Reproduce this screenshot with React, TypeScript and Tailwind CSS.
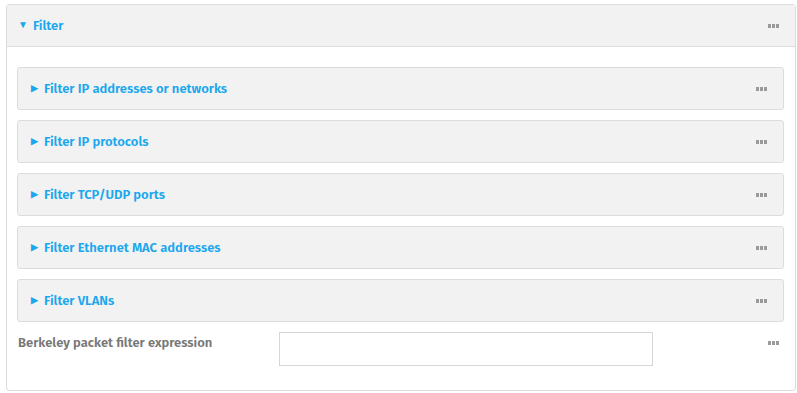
import React from 'react'

const sections = [
  'Filter IP addresses or networks',
  'Filter IP protocols',
  'Filter TCP/UDP ports',
  'Filter Ethernet MAC addresses',
  'Filter VLANs',
]

const Dots = () => (
  <span className="flex items-center gap-[1px]">
    <span className="h-[4px] w-[3px] bg-[#9a9a9a]" />
    <span className="h-[4px] w-[3px] bg-[#9a9a9a]" />
    <span className="h-[4px] w-[3px] bg-[#9a9a9a]" />
  </span>
)

const SubPanel = ({ title }: { title: string }) => (
  <div className="flex h-[43px] items-center justify-between rounded-[3px] border border-[#dcdcdc] bg-[#f2f2f2] pr-[16px] pl-[13px]">
    <div className="flex items-center text-[13px] font-semibold text-[#1aa7ee]">
      <span className="mr-[6px] text-[9px]">▶</span>
      {title}
    </div>
    <Dots />
  </div>
)

export default function App() {
  return (
    <div
      className="h-[393px] w-[797px] bg-white pt-[4px] pl-[6px]"
      style={{ fontFamily: '"Fira Sans", Lato, "Noto Sans", sans-serif' }}
    >
      <div className="w-[790px] rounded-[3px] border border-[#dcdcdc] bg-white">
        <div className="flex h-[42px] items-center justify-between border-b border-[#dcdcdc] bg-[#f2f2f2] pr-[16px] pl-[11px]">
          <div className="flex items-center text-[13px] font-semibold text-[#1aa7ee]">
            <span className="mr-[5px] text-[10px]">▼</span>
            Filter
          </div>
          <Dots />
        </div>
        <div className="flex flex-col gap-[10px] pt-[20px] pr-[11px] pl-[10px]">
          {sections.map((s) => (
            <SubPanel key={s} title={s} />
          ))}
        </div>
        <div className="flex h-[68px] items-start pt-[10px] pr-[16px] pl-[11px]">
          <div className="w-[261px] pt-[1px] text-[13px] font-semibold text-[#777]">
            Berkeley packet filter expression
          </div>
          <input className="h-[34px] w-[374px] border border-[#d6d6d6] bg-white outline-none" />
          <div className="ml-auto pt-[9px]">
            <Dots />
          </div>
        </div>
      </div>
    </div>
  )
}
